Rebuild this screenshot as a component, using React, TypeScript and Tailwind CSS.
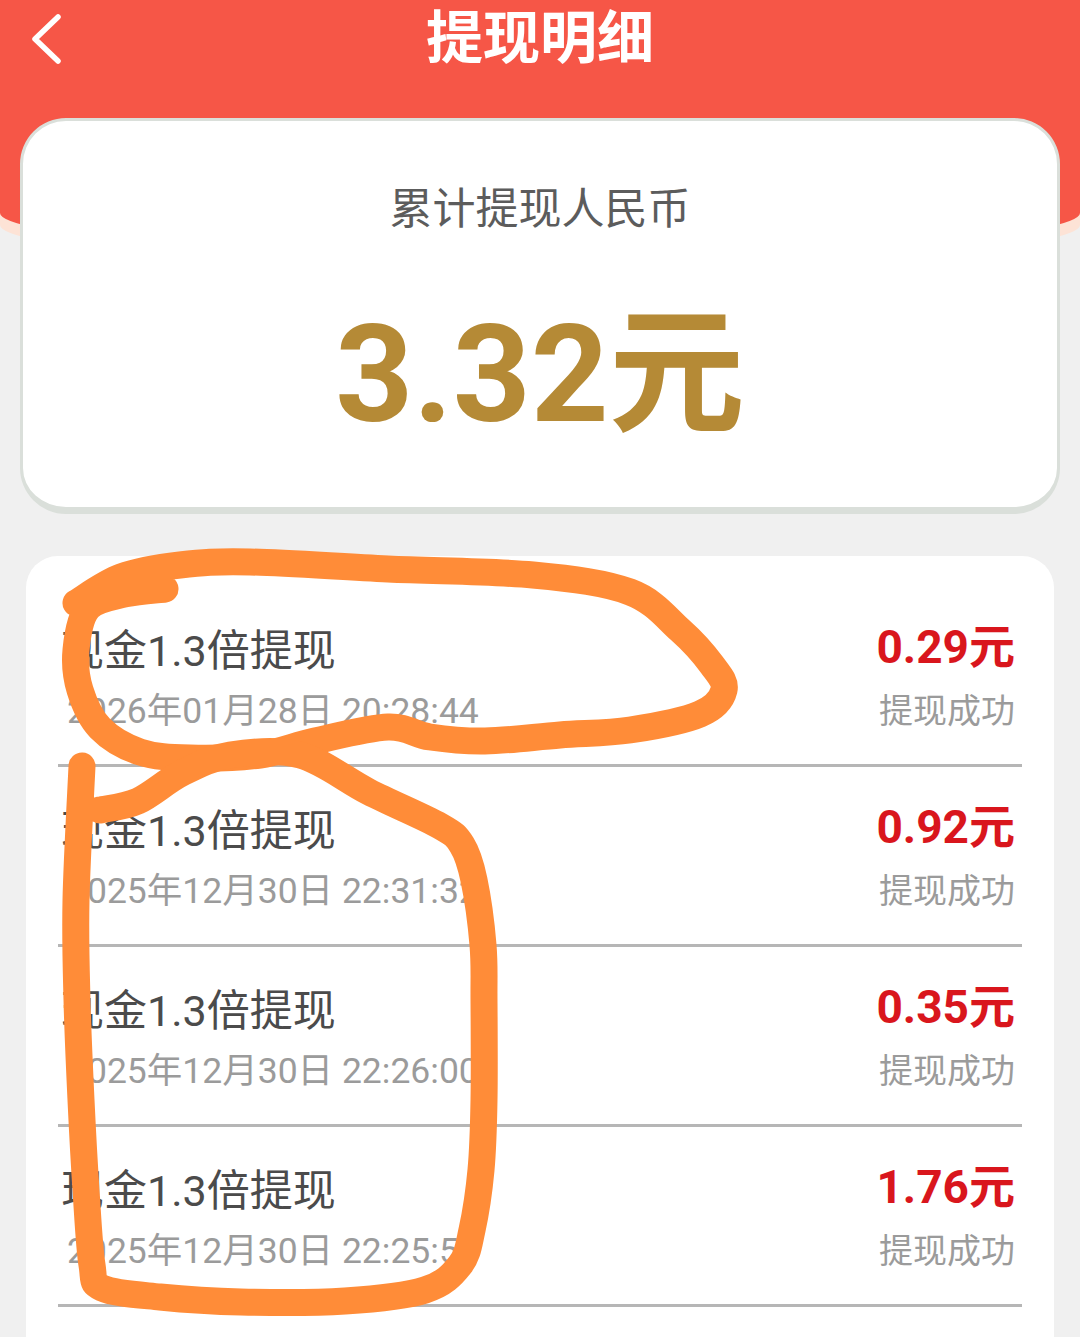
import React from 'react';

const cjk = 'font-["Roboto","Noto_Sans_CJK_SC",sans-serif]';

const records = [
  { title: '现金1.3倍提现', time: '2026年01月28日 20:28:44', amount: '0.29元' },
  { title: '现金1.3倍提现', time: '2025年12月30日 22:31:32', amount: '0.92元' },
  { title: '现金1.3倍提现', time: '2025年12月30日 22:26:00', amount: '0.35元' },
  { title: '现金1.3倍提现', time: '2025年12月30日 22:25:58', amount: '1.76元' },
];

// hand drawn marker strokes over the screenshot
const loop: number[][] = [
  [76, 603], [121, 577], [180, 565], [250, 562], [388, 569], [533, 575], [630, 592], [680, 630], [712, 665], [724, 690],
  [700, 714], [630, 730], [560, 735], [485, 741], [430, 737], [388, 727], [315, 741], [260, 755], [190, 758], [140, 752],
  [100, 728], [80, 690], [76, 650], [88, 608], [125, 594], [165, 589],
];
const body: number[][] = [
  [82, 766], [76, 900], [77, 1000], [81, 1100], [86, 1190], [92, 1265], [102, 1288], [160, 1297], [241, 1302], [345, 1301], [425, 1290], [460, 1265], [472, 1230],
  [481, 1170], [484, 1100], [484, 1000], [483, 945], [474, 880], [462, 845], [440, 826], [369, 792], [300, 755], [230, 755], [182, 773], [138, 801], [100, 810],
];

const smooth = (pts: number[][]) => {
  let d = `M${pts[0][0]} ${pts[0][1]}`;
  for (let i = 0; i < pts.length - 1; i++) {
    const p0 = pts[Math.max(i - 1, 0)];
    const p1 = pts[i];
    const p2 = pts[i + 1];
    const p3 = pts[Math.min(i + 2, pts.length - 1)];
    d += ` C${p1[0] + (p2[0] - p0[0]) / 6} ${p1[1] + (p2[1] - p0[1]) / 6} ${p2[0] - (p3[0] - p1[0]) / 6} ${p2[1] - (p3[1] - p1[1]) / 6} ${p2[0]} ${p2[1]}`;
  }
  return d;
};

const Row = ({ title, time, amount }: { title: string; time: string; amount: string }) => (
  <div className="flex h-[180px] justify-between border-b-[3px] border-[#b6b6b6] pl-[3px] pr-[7px] pt-[34px]">
    <div>
      <div className="text-[43px] leading-[60px] text-[#4b4b4b]">{title}</div>
      <div className="whitespace-nowrap pl-[6px] text-[35.5px] leading-[60px] text-[#9b9b9b]">{time}</div>
    </div>
    <div className="flex flex-col items-end">
      <div className="text-[46px] font-bold leading-[52px] text-[#d9161d]">{amount}</div>
      <div className="mt-[8px] text-[34px] leading-[60px] text-[#9b9b9b]">提现成功</div>
    </div>
  </div>
);

export default function App() {
  return (
    <div className={`relative h-[1337px] w-[1080px] overflow-hidden bg-[#f0f0f0] ${cjk}`}>
      <header className="flex h-[254px] items-start justify-center rounded-b-[540px_41px] bg-[#f65647] shadow-[0_12px_0_#fde3d6]">
        <button className="absolute left-[28px] top-[12px]">
          <svg width="38" height="54" viewBox="0 0 38 54" fill="none" stroke="white" strokeWidth="5.5" strokeLinecap="round" strokeLinejoin="round">
            <path d="M30 5 L7 27 L30 49" />
          </svg>
        </button>
        <h1 className="pt-[4px] text-[57px] font-bold leading-[70px] text-white">提现明细</h1>
      </header>

      <section className="relative mx-5 -mt-[136px] flex h-[396px] flex-col items-center rounded-[46px] border-[3px] border-b-[7px] border-[#dadfda] bg-white">
        <div className="mt-[58px] text-[43px] leading-[60px] text-[#5c5c5c]">累计提现人民币</div>
        <div className="mt-[71px] text-[136px] font-bold leading-[130px] text-[#b58a36]">3.32元</div>
      </section>

      <section className="mx-[26px] mt-[42px] rounded-t-[32px] bg-white px-8 pb-[60px] pt-[31px]">
        {records.map((r, i) => (
          <Row key={i} {...r} />
        ))}
      </section>

      <svg className="absolute inset-0" width="1080" height="1337" viewBox="0 0 1080 1337" fill="none" stroke="#ff8c38" strokeWidth="27" strokeLinecap="round" strokeLinejoin="round">
        <path d={smooth(loop)} />
        <path d={smooth(body)} />
      </svg>
    </div>
  );
}
